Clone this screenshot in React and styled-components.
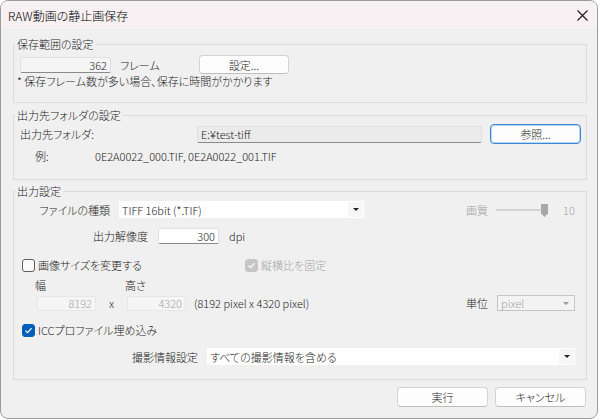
import React from "react";
import styled, { createGlobalStyle } from "styled-components";

const GlobalStyle = createGlobalStyle`
  html, body { margin: 0; padding: 0; background: #ffffff; }
  body {
    font-family: "Noto Sans CJK JP", "Noto Sans", sans-serif;
    font-size: 11px;
    font-weight: 300;
    color: #1c1c1c;
    font-feature-settings: "palt";
  }
  * { box-sizing: border-box; }
`;

const Window = styled.div`
  width: 598px;
  height: 419px;
  border: 1px solid #9c9c9c;
  border-radius: 8px;
  overflow: hidden;
  background: #f0f0f0;
  display: flex;
  flex-direction: column;
`;

const TitleBar = styled.div`
  height: 28px;
  background: #f7f1f3;
  display: flex;
  align-items: center;
  justify-content: space-between;
  padding: 0 9px 0 7px;
`;

const Title = styled.div`
  font-size: 12px;
  color: #000;
`;

const Body = styled.div`
  padding: 0 10px 0 12px;
  display: flex;
  flex-direction: column;
`;

const Group = styled.fieldset`
  margin: ${(p) => p.$top}px 0 0 0;
  padding: 0;
  border: 1px solid #dcdcdc;
  height: ${(p) => p.$h}px;
  min-width: 0;
`;

const Legend = styled.legend`
  margin-left: 1px;
  padding: 0 2px;
  line-height: 16px;
`;

const Content = styled.div`
  padding: 0 11px 0 6px;
  display: flex;
  flex-direction: column;
`;

const Row = styled.div`
  display: flex;
  align-items: center;
  height: ${(p) => p.$h}px;
  margin-top: ${(p) => p.$mt || 0}px;
`;

const Cell = styled.div`
  flex: ${(p) => (p.$grow ? 1 : "none")};
  width: ${(p) => (p.$w ? `${p.$w}px` : "auto")};
  margin-left: ${(p) => p.$ml || 0}px;
  text-align: ${(p) => p.$align || "left"};
  padding-right: ${(p) => p.$pr || 0}px;
  color: ${(p) => (p.$dim ? "#a3a3a3" : "inherit")};
  white-space: nowrap;
`;

const Field = styled.div`
  flex: none;
  width: ${(p) => p.$w}px;
  height: ${(p) => p.$h}px;
  margin-left: ${(p) => p.$ml || 0}px;
  background: ${(p) => (p.$white ? "#ffffff" : p.$dark ? "#ebebeb" : "#f5f5f5")};
  border: 1px solid ${(p) => (p.$dim ? "#e6e6e6" : "#e0e0e0")};
  border-bottom-color: ${(p) => (p.$dim ? "#e6e6e6" : "#8a8a8a")};
  border-radius: 2px;
  display: flex;
  align-items: center;
  justify-content: ${(p) => (p.$left ? "flex-start" : "flex-end")};
  padding: 0 3px;
  color: ${(p) => (p.$dim ? "#a3a3a3" : "#1c1c1c")};
  white-space: nowrap;
`;

const Button = styled.div`
  flex: none;
  width: ${(p) => p.$w || 91}px;
  height: ${(p) => p.$h || 20}px;
  margin-left: ${(p) => p.$ml || 0}px;
  background: #fdfdfd;
  border: 1px solid ${(p) => (p.$focus ? "#3a86d6" : "#d3d3d3")};
  border-bottom-color: ${(p) => (p.$focus ? "#3a86d6" : "#bdbdbd")};
  box-shadow: ${(p) => (p.$focus ? "inset 0 0 0 1px #b9d6f4" : "none")};
  border-radius: 4px;
  display: flex;
  align-items: center;
  justify-content: center;
  color: #1c1c1c;
`;

const Select = styled.div`
  flex: ${(p) => (p.$grow ? 1 : "none")};
  width: ${(p) => (p.$w ? `${p.$w}px` : "auto")};
  height: ${(p) => p.$h || 17}px;
  background: ${(p) => (p.$disabled ? "#f3f3f3" : "#ffffff")};
  border: ${(p) => (p.$disabled ? "1px solid #c6c6c6" : "none")};
  display: flex;
  align-items: center;
  justify-content: space-between;
  padding-left: 3px;
  color: ${(p) => (p.$disabled ? "#a3a3a3" : "#1c1c1c")};
  white-space: nowrap;
`;

const Arrow = styled.div`
  width: 15px;
  align-self: stretch;
  margin: 1px;
  background: ${(p) => (p.$disabled ? "transparent" : "#f6f6f6")};
  display: flex;
  align-items: center;
  justify-content: center;
  &::after {
    content: "";
    border-left: 3px solid transparent;
    border-right: 3px solid transparent;
    border-top: 3px solid ${(p) => (p.$disabled ? "#9a9a9a" : "#222")};
  }
`;

const Box = styled.div`
  width: 13px;
  height: 13px;
  flex: none;
  margin-left: ${(p) => p.$ml || 0}px;
  border-radius: 3px;
  border: 1px solid ${(p) => (p.$checked ? p.$color : "#5e5e5e")};
  background: ${(p) => (p.$checked ? p.$color : "#f9f9f9")};
  display: flex;
  align-items: center;
  justify-content: center;
`;

const CheckLabel = styled.span`
  margin-left: ${(p) => p.$ml || 3}px;
  color: ${(p) => (p.$dim ? "#a3a3a3" : "inherit")};
  white-space: nowrap;
`;

const Footer = styled.div`
  display: flex;
  justify-content: flex-end;
  gap: 7px;
  margin-top: 7px;
  padding-right: 1px;
`;

const Tick = () => (
  <svg width="9" height="9" viewBox="0 0 9 9">
    <path d="M1.5 4.6 L3.6 6.7 L7.6 2.2" fill="none" stroke="#fff" strokeWidth="1.2" />
  </svg>
);

const CheckBox = ({ checked, color = "#005fb8", ml }) => (
  <Box $checked={checked} $color={color} $ml={ml}>
    {checked && <Tick />}
  </Box>
);

const Slider = () => (
  <svg width="55" height="16" viewBox="0 0 55 16">
    <rect x="0" y="7" width="52" height="2" fill="#d4d4d4" />
    <path d="M45 2 h7 v9.5 l-3.5 3.5 l-3.5 -3.5 z" fill="#a8a8a8" />
  </svg>
);

export default function App() {
  return (
    <>
      <GlobalStyle />
      <Window>
        <TitleBar>
          <Title>RAW動画の静止画保存</Title>
          <svg width="11" height="11" viewBox="0 0 11 11">
            <path d="M0.5 0.5 L10.5 10.5 M10.5 0.5 L0.5 10.5" stroke="#1a1a1a" strokeWidth="1.1" />
          </svg>
        </TitleBar>
        <Body>
          <Group $top={7} $h={67}>
            <Legend>保存範囲の設定</Legend>
            <Content>
              <Row $h={19} $mt={3}>
                <Field $w={91} $h={16}>362</Field>
                <Cell $w={79} $ml={9}>フレーム</Cell>
                <Button $w={90} $h={19}>設定...</Button>
              </Row>
              <Row $h={14}>
                <Cell $ml={-3}>* 保存フレーム数が多い場合、保存に時間がかかります</Cell>
              </Row>
            </Content>
          </Group>

          <Group $top={4} $h={73}>
            <Legend>出力先フォルダの設定</Legend>
            <Content>
              <Row $h={20} $mt={1}>
                <Cell $w={177}>出力先フォルダ:</Cell>
                <Field $w={285} $h={17} $left $dark>E:¥test-tiff</Field>
                <Button $ml={8} $focus>参照...</Button>
              </Row>
              <Row $h={14} $mt={5}>
                <Cell $w={60} $ml={15}>例:</Cell>
                <Cell>0E2A0022_000.TIF, 0E2A0022_001.TIF</Cell>
              </Row>
            </Content>
          </Group>

          <Group $top={3} $h={197}>
            <Legend>出力設定</Legend>
            <Content>
              <Row $h={17} $mt={2}>
                <Cell $w={99} $align="right" $pr={9}>ファイルの種類</Cell>
                <Select $w={245}>
                  TIFF 16bit (*.TIF)
                  <Arrow />
                </Select>
                <Cell $w={30} $ml={102} $dim>画質</Cell>
                <Slider />
                <Cell $ml={12} $dim>10</Cell>
              </Row>
              <Row $h={17} $mt={9}>
                <Cell $w={138} $align="right" $pr={10}>出力解像度</Cell>
                <Field $w={61} $h={16} $white>300</Field>
                <Cell $ml={10}>dpi</Cell>
              </Row>
              <Row $h={16} $mt={13}>
                <CheckBox checked={false} ml={2} />
                <Cell $w={207} $ml={3}>画像サイズを変更する</Cell>
                <CheckBox checked color="#c6c6c6" />
                <CheckLabel $dim $ml={3}>縦横比を固定</CheckLabel>
              </Row>
              <Row $h={14} $mt={5}>
                <Cell $w={90} $ml={15}>幅</Cell>
                <Cell>高さ</Cell>
              </Row>
              <Row $h={16} $mt={3}>
                <Field $w={59} $h={15} $ml={17} $dim>8192</Field>
                <Cell $w={31} $align="center">x</Cell>
                <Field $w={59} $h={15} $dim>4320</Field>
                <Cell $grow $ml={8}>(8192 pixel x 4320 pixel)</Cell>
                <Cell $w={31}>単位</Cell>
                <Select $w={78} $h={16} $disabled>
                  pixel
                  <Arrow $disabled />
                </Select>
              </Row>
              <Row $h={16} $mt={11}>
                <CheckBox checked ml={2} />
                <CheckLabel>ICCプロファイル埋め込み</CheckLabel>
              </Row>
              <Row $h={17} $mt={10}>
                <Cell $w={187} $align="right" $pr={9}>撮影情報設定</Cell>
                <Select $grow>
                  すべての撮影情報を含める
                  <Arrow />
                </Select>
              </Row>
            </Content>
          </Group>

          <Footer>
            <Button>実行</Button>
            <Button>キャンセル</Button>
          </Footer>
        </Body>
      </Window>
    </>
  );
}
